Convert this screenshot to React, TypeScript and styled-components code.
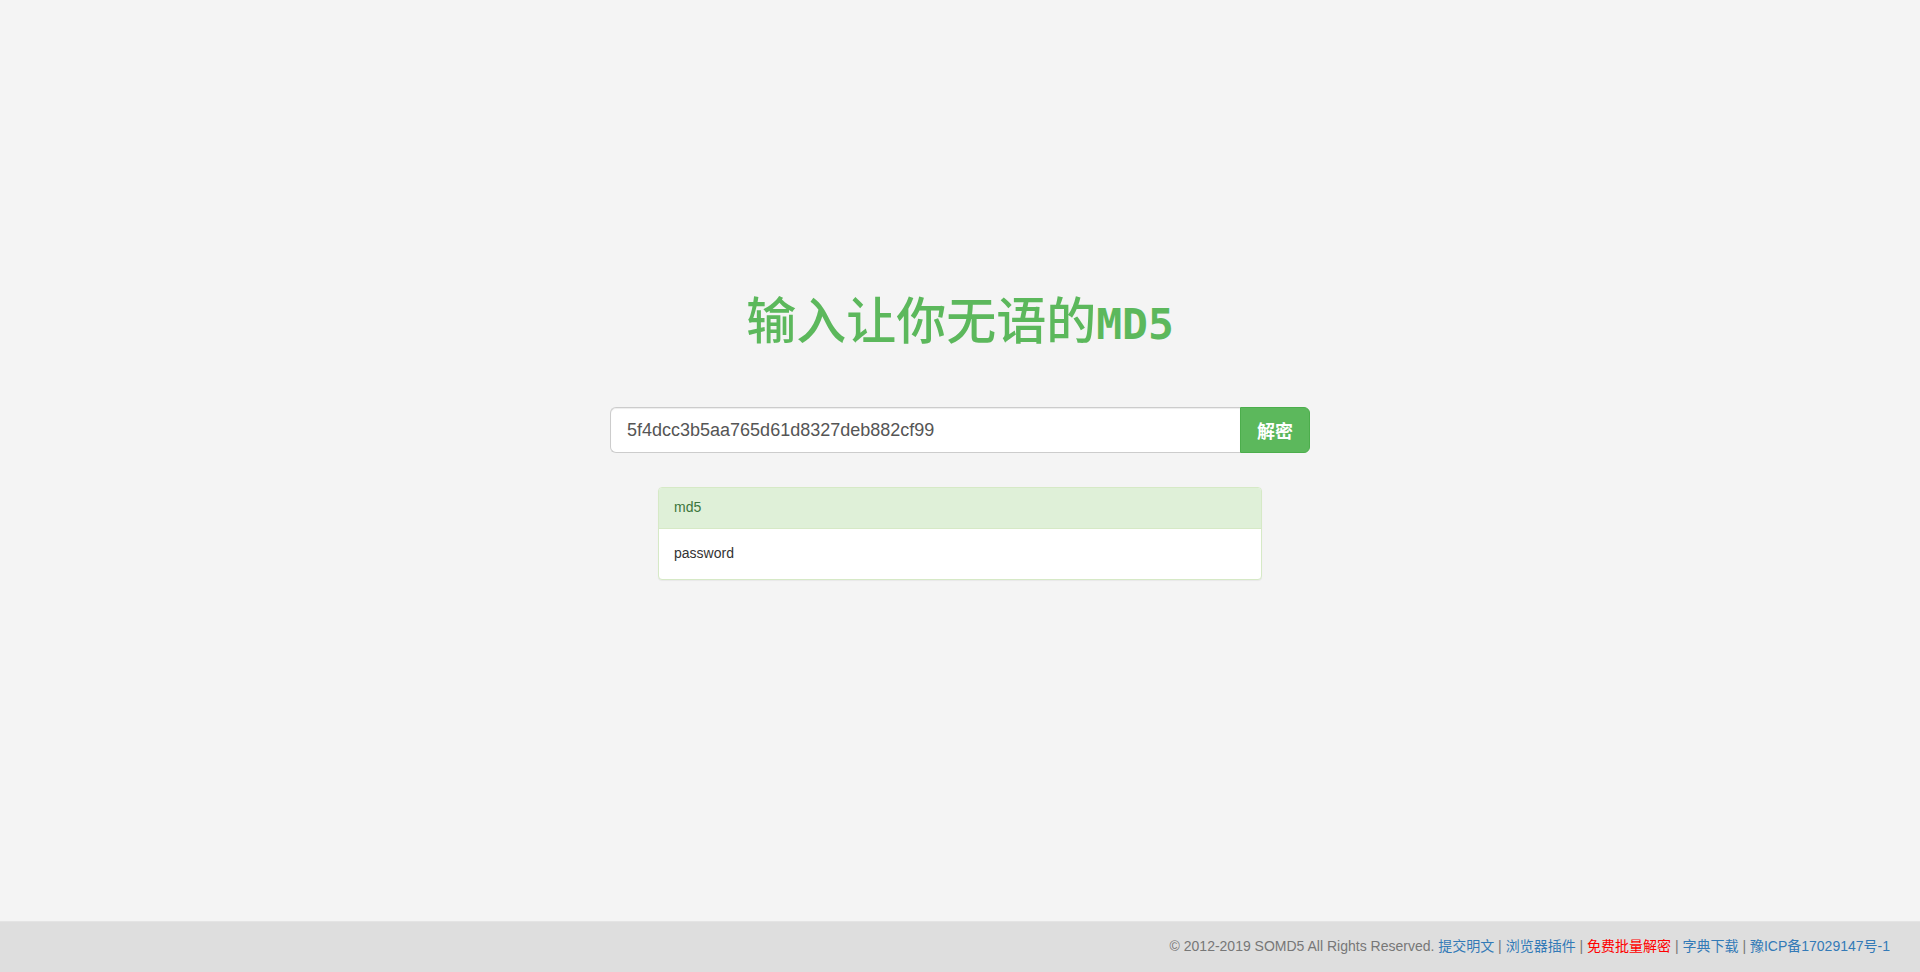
import React, { useState } from 'react';
import styled, { createGlobalStyle } from 'styled-components';

const GlobalStyle = createGlobalStyle`
    html, body {
        margin: 0;
        padding: 0;
        background: #f4f4f4;
    }
    body {
        font-family: 'Liberation Sans', Arial, 'Noto Sans CJK SC', sans-serif;
        font-size: 14px;
        line-height: 1.42857;
        color: #333;
    }
    * {
        box-sizing: border-box;
    }
`;

const Page = styled.div`
    min-height: 100vh;
    display: flex;
    flex-direction: column;
`;

const Main = styled.main`
    flex: 1;
    display: flex;
    flex-direction: column;
    align-items: center;
    padding-top: 290px;
`;

const Title = styled.h1`
    margin: 0 0 59px;
    font-family: 'Noto Sans CJK SC', sans-serif;
    font-size: 50px;
    font-weight: 500;
    line-height: 1.1;
    color: #5cb85c;
    white-space: nowrap;
`;

const TitleLatin = styled.span`
    font-family: 'DejaVu Sans Mono', monospace;
    font-size: 43px;
    font-weight: 700;
`;

const SearchGroup = styled.form`
    display: flex;
    width: 700px;
    height: 46px;
    margin: 0 0 34px;
`;

const SearchInput = styled.input`
    flex: 1;
    min-width: 0;
    height: 46px;
    padding: 10px 16px;
    font-family: 'Liberation Sans', Arial, sans-serif;
    font-size: 18px;
    color: #555;
    background: #fff;
    border: 1px solid #ccc;
    border-right: 0;
    border-radius: 6px 0 0 6px;
    box-shadow: inset 0 1px 1px rgba(0, 0, 0, 0.075);
    outline: none;
`;

const SearchButton = styled.button`
    width: 70px;
    height: 46px;
    padding: 0 16px;
    font-family: 'Noto Sans CJK SC', sans-serif;
    font-size: 18px;
    font-weight: 700;
    color: #fff;
    background: #5cb85c;
    border: 1px solid #4cae4c;
    border-radius: 0 6px 6px 0;
    cursor: pointer;
`;

const Panel = styled.div`
    width: 604px;
    background: #fff;
    border: 1px solid #d6e9c6;
    border-radius: 4px;
    box-shadow: 0 1px 1px rgba(0, 0, 0, 0.05);
    overflow: hidden;
`;

const PanelHeading = styled.div`
    padding: 10px 15px;
    color: #3c763d;
    background: #dff0d8;
    border-bottom: 1px solid #d6e9c6;
`;

const PanelBody = styled.div`
    padding: 15px;
    color: #333;
`;

const Footer = styled.footer`
    height: 51px;
    display: flex;
    align-items: center;
    justify-content: flex-end;
    padding: 0 30px;
    background: #dedede;
    border-top: 1px solid #e4e4e4;
    color: #777;
    font-family: 'Liberation Sans', Arial, 'Noto Sans CJK SC', sans-serif;
    font-size: 14px;
    white-space: nowrap;
`;

const FooterLink = styled.a<{ $hot?: boolean }>`
    color: ${p => (p.$hot ? '#f00' : '#337ab7')};
    text-decoration: none;
`;

const links = [
    { label: '提交明文' },
    { label: '浏览器插件' },
    { label: '免费批量解密', hot: true },
    { label: '字典下载' },
    { label: '豫ICP备17029147号-1' }
];

const App = () => {
    const [hash, setHash] = useState('5f4dcc3b5aa765d61d8327deb882cf99');

    return (
        <Page>
            <GlobalStyle />
            <Main>
                <Title>
                    输入让你无语的<TitleLatin>MD5</TitleLatin>
                </Title>
                <SearchGroup onSubmit={e => e.preventDefault()}>
                    <SearchInput type="text" value={hash} onChange={e => setHash(e.target.value)} />
                    <SearchButton type="submit">解密</SearchButton>
                </SearchGroup>
                <Panel>
                    <PanelHeading>md5</PanelHeading>
                    <PanelBody>password</PanelBody>
                </Panel>
            </Main>
            <Footer>
                <span>© 2012-2019 SOMD5 All Rights Reserved.&nbsp;</span>
                {links.map((l, i) => (
                    <React.Fragment key={l.label}>
                        {i > 0 && <span>&nbsp;|&nbsp;</span>}
                        <FooterLink href="#" $hot={l.hot}>
                            {l.label}
                        </FooterLink>
                    </React.Fragment>
                ))}
            </Footer>
        </Page>
    );
};

export default App;
